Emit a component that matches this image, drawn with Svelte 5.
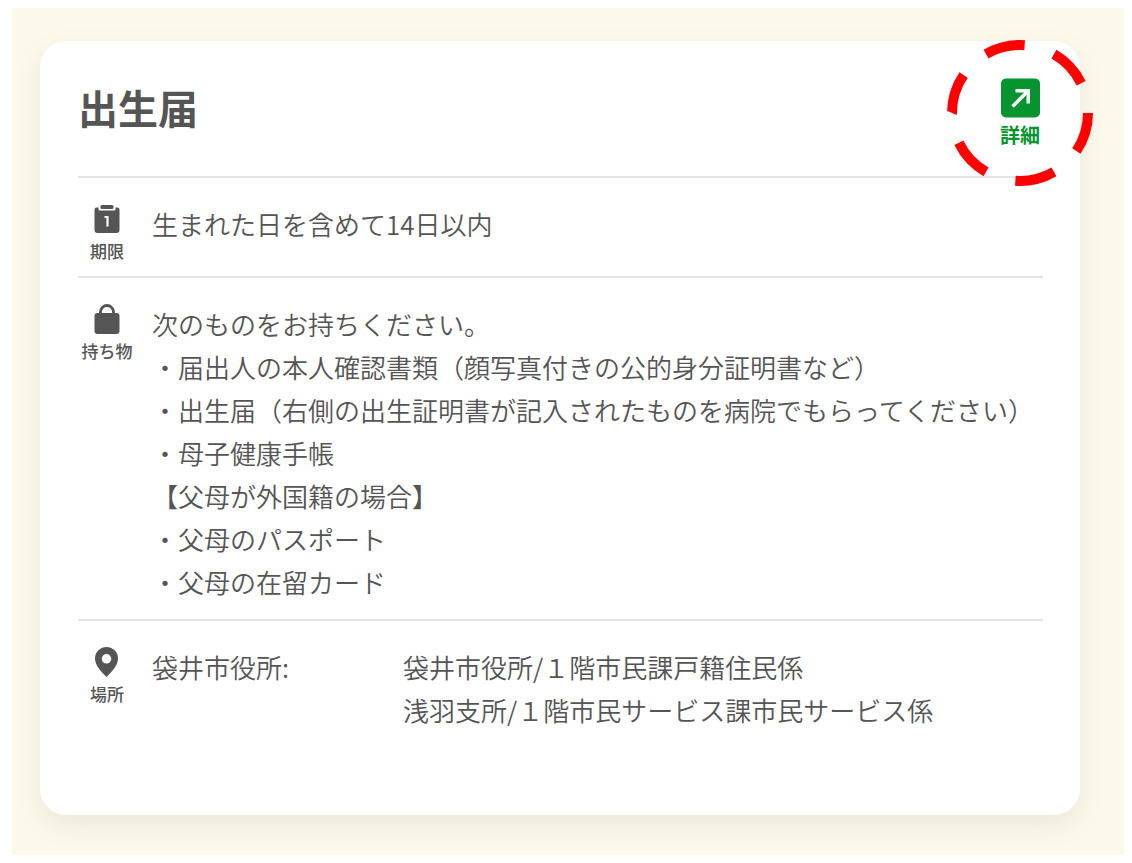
<script>
  const deadline = '生まれた日を含めて14日以内';
  const belongings = [
    '次のものをお持ちください。',
    '・届出人の本人確認書類（顔写真付きの公的身分証明書など）',
    '・出生届（右側の出生証明書が記入されたものを病院でもらってください）',
    '・母子健康手帳',
    '【父母が外国籍の場合】',
    '・父母のパスポート',
    '・父母の在留カード'
  ];
  const places = [
    '袋井市役所/１階市民課戸籍住民係',
    '浅羽支所/１階市民サービス課市民サービス係'
  ];
</script>

<main>
  <article class="card">
    <header>
      <h1>出生届</h1>
      <a class="detail" href="#detail">
        <svg width="40" height="40" viewBox="0 0 40 40" aria-hidden="true">
          <rect x="1" y="0.5" width="39" height="39" rx="5" fill="#05942f" />
          <path d="M12.500 28.500 L28 13 M15.500 12.800 H28.200 V25.500" fill="none" stroke="#fff" stroke-width="3.400" />
        </svg>
        <span>詳細</span>
        <svg class="ring" width="148" height="148" viewBox="0 0 148 148" aria-hidden="true">
          <circle cx="74" cy="74" r="68" pathLength="360" fill="none" stroke="#f00" stroke-width="10" stroke-dasharray="34 26" />
        </svg>
      </a>
    </header>

    <section class="row">
      <h2>
        <svg width="26" height="30" viewBox="0 0 26 30" aria-hidden="true">
          <path d="M2.500 3.500 H4.500 V5 Q4.500 6.500 6 6.500 H20 Q21.500 6.500 21.500 5 V3.500 H23.500 Q25.500 3.500 25.500 5.500 V26 Q25.500 29 22.500 29 H3.500 Q.500 29 .500 26 V5.500 Q.500 3.500 2.500 3.500Z" fill="#555" />
          <rect x="6.500" y="1" width="13" height="4" rx="1.500" fill="#555" />
          <path d="M10.500 13 H13.500 V22.500" fill="none" stroke="#fff" stroke-width="2.200" />
        </svg>
        <span>期限</span>
      </h2>
      <p>{deadline}</p>
    </section>

    <section class="row">
      <h2>
        <svg width="26" height="30" viewBox="0 0 26 30" aria-hidden="true">
          <path d="M6.500 11 V8 A6.500 6.500 0 0 1 19.500 8 V11" fill="none" stroke="#555" stroke-width="2.800" />
          <rect x=".5" y="9" width="25" height="21" rx="3" fill="#555" />
        </svg>
        <span>持ち物</span>
      </h2>
      <div>
        {#each belongings as line}
          <p>{line}</p>
        {/each}
      </div>
    </section>

    <section class="row">
      <h2>
        <svg width="26" height="30" viewBox="0 0 26 30" aria-hidden="true">
          <path fill-rule="evenodd" d="M12.500 0 A11.500 11.500 0 0 0 1 11.500 C1 18.500 7.500 25 12.500 30 C17.500 25 24 18.500 24 11.500 A11.500 11.500 0 0 0 12.500 0Z M12.500 7 A4.800 4.800 0 1 1 12.500 16.600 A4.800 4.800 0 1 1 12.500 7Z" fill="#555" />
        </svg>
        <span>場所</span>
      </h2>
      <div class="places">
        <p>袋井市役所:</p>
        <div>
          {#each places as place}
            <p>{place}</p>
          {/each}
        </div>
      </div>
    </section>
  </article>
</main>

<style>
  :global(body) {
    background: #fff;
  }
  main {
    margin: 8px 8px 8px 12px;
    padding: 33px 44px 40px 28px;
    background: #fcf8ea;
    color: #555;
    font-family: "Noto Sans CJK JP", sans-serif;
    text-spacing-trim: space-all;
    overflow: hidden;
  }
  .card {
    padding: 37px 37px 68px 38px;
    border-radius: 26px;
    background: #fff;
    box-shadow: 0 10px 30px rgba(0, 0, 0, 0.07);
  }
  header {
    display: flex;
    justify-content: space-between;
    align-items: flex-start;
    padding-bottom: 28px;
  }
  h1,
  h2,
  p {
    margin: 0;
  }
  h1 {
    font-size: 40px;
    line-height: 58px;
    font-weight: 700;
  }
  .detail {
    position: relative;
    display: flex;
    flex-direction: column;
    align-items: center;
    gap: 4px;
    margin-right: 3px;
    color: #05942f;
    font-size: 20px;
    line-height: 26px;
    font-weight: 700;
    text-decoration: none;
  }
  .ring {
    position: absolute;
    top: -39px;
    left: -54px;
  }
  .row {
    display: grid;
    grid-template-columns: 58px 1fr;
    column-gap: 16px;
    padding: 24px 0 16px;
    border-top: 2px solid #e4e4e4;
  }
  h2 {
    display: flex;
    flex-direction: column;
    align-items: center;
    gap: 8px;
    padding-top: 2px;
    font-size: 17px;
    line-height: 18px;
    font-weight: 500;
    white-space: nowrap;
  }
  .row p {
    font-size: 26px;
    line-height: 43px;
    font-weight: 350;
  }
  .places {
    display: grid;
    grid-template-columns: 251fr 640fr;
  }
</style>
